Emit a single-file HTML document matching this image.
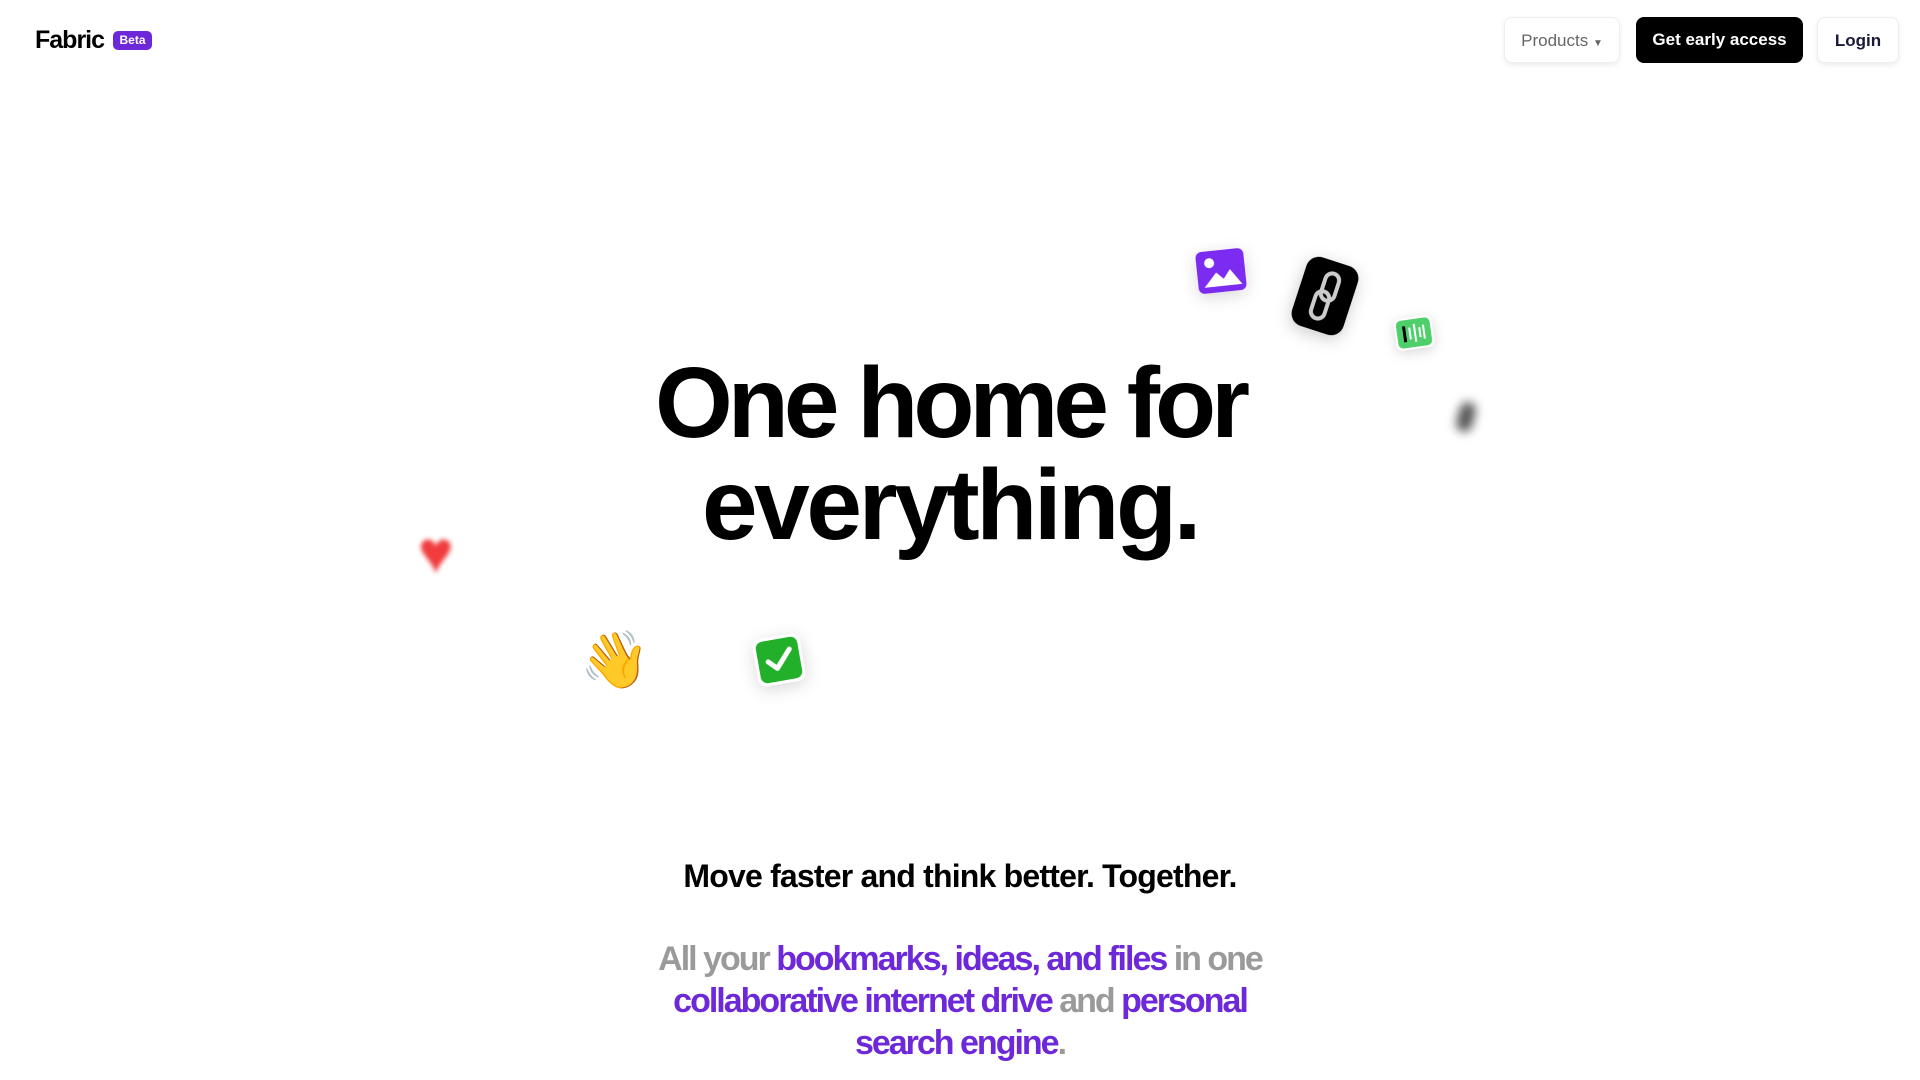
<!DOCTYPE html>
<html><head><meta charset="utf-8"><style>
*{margin:0;padding:0;box-sizing:border-box}
body{width:1920px;height:1080px;background:#fff;font-family:"Liberation Sans",sans-serif;position:relative;overflow:hidden;color:#000}
.logo{position:absolute;left:35px;top:26px;font-size:25px;font-weight:700;letter-spacing:-1px}
.beta{position:absolute;left:113px;top:31px;width:39px;height:19px;background:#6d28d9;color:#fff;border-radius:5px;font-size:12px;font-weight:700;text-align:center;line-height:19px}
.btn{position:absolute;top:17px;height:46px;border-radius:8px;font-size:17px;line-height:46px;text-align:center}
.prod{left:1504px;width:116px;background:#fff;color:#666;box-shadow:0 2px 6px rgba(0,0,0,.08);border:1px solid #eee}
.get{left:1636px;width:167px;background:#000;color:#fff;font-weight:700}
.login{left:1817px;width:82px;background:#fff;color:#1a1a3a;font-weight:700;box-shadow:0 2px 6px rgba(0,0,0,.08);border:1px solid #eee}
h1{position:absolute;left:0;width:1900px;top:352px;text-align:center;font-size:100px;line-height:102px;font-weight:700;letter-spacing:-5px}
h1 span{letter-spacing:-3.4px}
.sub{position:absolute;left:0;width:1920px;top:858px;text-align:center;font-size:32px;font-weight:700;letter-spacing:-0.8px}
.para{position:absolute;left:0;width:1920px;top:938px;text-align:center;font-size:34px;line-height:42px;font-weight:700;letter-spacing:-2px;color:#9a9a9a}
.para b{color:#6d28d9}
.ic{position:absolute}
</style></head><body>
<div class="logo">Fabric</div><div class="beta">Beta</div>
<div class="btn prod">Products <span style="font-size:10px">▼</span></div>
<div class="btn get">Get early access</div>
<div class="btn login">Login</div>

<h1>One home for<br><span>everything.</span></h1>
<div class="sub">Move faster and think better. Together.</div>
<div class="para">All your <b>bookmarks, ideas, and files</b> in one<br><b>collaborative internet drive</b> and <b>personal</b><br><b>search engine</b>.</div>

<svg class="ic" style="left:1197px;top:250px;transform:rotate(-6deg);filter:drop-shadow(0 4px 8px rgba(0,0,0,.15))" width="48" height="42" viewBox="0 0 48 42"><rect width="48" height="42" rx="6" fill="#7c2cf0"/><circle cx="13" cy="12" r="5" fill="#fff"/><path d="M6 36 L19 22 L26 29 L33 20 L44 36 Z" fill="#fff"/></svg>
<svg class="ic" style="left:1298px;top:260px;transform:rotate(18deg);filter:drop-shadow(0 4px 8px rgba(0,0,0,.2))" width="54" height="72" viewBox="0 0 54 72"><rect width="54" height="72" rx="13" fill="#000"/><rect x="22" y="12" width="14" height="28" rx="7" fill="none" stroke="#ccc" stroke-width="4"/><rect x="18" y="32" width="14" height="28" rx="7" fill="none" stroke="#ccc" stroke-width="4"/></svg>
<svg class="ic" style="left:1395px;top:317px;transform:rotate(-8deg);filter:drop-shadow(0 3px 6px rgba(0,0,0,.15))" width="38" height="32" viewBox="0 0 38 32"><rect width="38" height="32" rx="6" fill="#fff"/><rect x="2" y="2" width="34" height="28" rx="5" fill="#4fcf6a"/><rect x="8" y="8" width="3" height="16" fill="#000"/><rect x="14" y="10" width="2" height="12" fill="#fff"/><rect x="19" y="7" width="2" height="18" fill="#fff"/><rect x="24" y="11" width="2" height="10" fill="#fff"/><rect x="28" y="9" width="2" height="14" fill="#fff"/></svg>
<div class="ic" style="left:1458px;top:402px;width:16px;height:30px;border-radius:8px;background:#555;filter:blur(5px);transform:rotate(15deg)"></div>
<div class="ic" style="left:418px;top:518px;font-size:60px;line-height:70px;color:#f03c3c;filter:blur(2.5px)">♥</div>
<div class="ic" style="left:580px;top:630px;font-size:56px;line-height:60px">👋</div>
<svg class="ic" style="left:755px;top:636px;transform:rotate(-10deg);filter:drop-shadow(0 4px 8px rgba(0,0,0,.15))" width="48" height="48" viewBox="0 0 48 48"><rect width="48" height="48" rx="8" fill="#fff"/><rect x="3" y="3" width="42" height="42" rx="7" fill="#22b02a"/><path d="M13 24 L21 32 L36 15" fill="none" stroke="#fff" stroke-width="5" stroke-linecap="round" stroke-linejoin="round"/></svg>
</body></html>
